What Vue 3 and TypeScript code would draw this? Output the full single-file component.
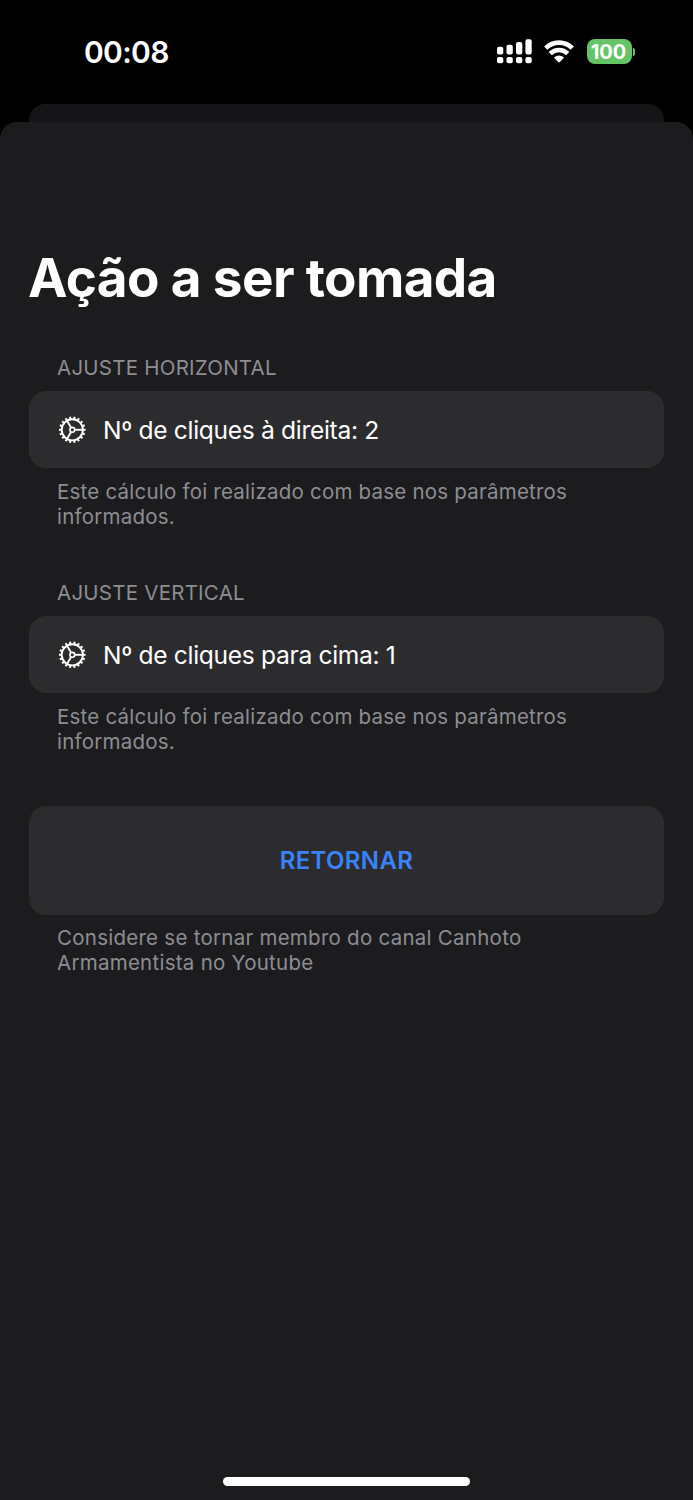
<script setup lang="ts">
interface Adjustment {
  title: string
  label: string
}

const adjustments: Adjustment[] = [
  { title: 'AJUSTE HORIZONTAL', label: 'Nº de cliques à direita: 2' },
  { title: 'AJUSTE VERTICAL', label: 'Nº de cliques para cima: 1' },
]

const teeth = Array.from({ length: 18 }, (_, i) => i * 20)
const spokes = [0, 120, 240]
</script>

<template>
  <div class="screen">
    <header class="status">
      <span class="time">00:08</span>
      <div class="indicators">
        <svg class="signal" width="36" height="26" viewBox="0 0 36 26" fill="#fff">
          <rect x="0" y="8.8" width="6.3" height="7.6" rx="2" />
          <rect x="9.5" y="6.8" width="6.3" height="9.6" rx="2" />
          <rect x="19" y="4" width="6.3" height="12.4" rx="2" />
          <rect x="28.4" y="1.2" width="6.3" height="15.2" rx="2" />
          <rect v-for="x in [0, 9.5, 19, 28.4]" :key="x" :x="x" y="19" width="6.3" height="6.3" rx="2" />
        </svg>
        <svg class="wifi" width="30" height="24" viewBox="0 0 30 24">
          <g fill="none" stroke="#fff" stroke-width="4.6">
            <path d="M1.7 8.1 A19 19 0 0 1 28.3 8.1" />
            <path d="M6.3 13.6 A12.2 12.2 0 0 1 23.7 13.6" />
          </g>
          <path d="M10 17.5 Q15 13.5 20 17.5 L15.8 22 Q15 22.8 14.2 22 Z" fill="#fff" />
        </svg>
        <div class="battery">
          <span class="level">100</span>
          <i class="nub"></i>
        </div>
      </div>
    </header>
    <div class="backdrop"></div>
    <main class="sheet">
      <h1>Ação a ser tomada</h1>
      <section v-for="item in adjustments" :key="item.title">
        <h2>{{ item.title }}</h2>
        <div class="row">
          <svg class="gear" width="28" height="28" viewBox="-14.3 -13.8 28 28" fill="none" stroke="#fff">
            <circle r="10.6" stroke-width="1.9" />
            <circle r="2.4" stroke-width="1.6" />
            <path v-for="a in spokes" :key="'s' + a" d="M2.8 0H10.5" stroke-width="1.9" :transform="`rotate(${a})`" />
            <path v-for="a in teeth" :key="a" d="M11 0H13.3" stroke-width="2" :transform="`rotate(${a})`" />
          </svg>
          <span class="label">{{ item.label }}</span>
        </div>
        <p>Este cálculo foi realizado com base nos parâmetros<br />informados.</p>
      </section>
      <button type="button">RETORNAR</button>
      <p>Considere se tornar membro do canal Canhoto<br />Armamentista no Youtube</p>
      <div class="home"></div>
    </main>
  </div>
</template>

<style>
body {
  background: #000;
}
</style>

<style scoped>
.screen {
  box-sizing: border-box;
  width: 693px;
  height: 1500px;
  overflow: hidden;
  background: #000;
  color: #fff;
  font-family: Inter, "Liberation Sans", sans-serif;
  display: flex;
  flex-direction: column;
}
.status {
  height: 104px;
  box-sizing: border-box;
  padding: 0 58px 0 84px;
  display: flex;
  justify-content: space-between;
  align-items: flex-start;
}
.time {
  margin-top: 33px;
  font-size: 30px;
  line-height: 38px;
  font-weight: 600;
  letter-spacing: -0.7px;
}
.indicators {
  display: flex;
  align-items: flex-start;
  padding-top: 38px;
}
.wifi {
  margin: 2px 13px 0 11px;
}
.battery {
  display: flex;
  align-items: center;
  margin-top: 1px;
}
.level {
  width: 45px;
  height: 25px;
  box-sizing: border-box;
  padding: 1px 2px 0 0;
  border-radius: 8px;
  background: #65c466;
  font-size: 20px;
  line-height: 25px;
  font-weight: 700;
  text-align: center;
}
.nub {
  width: 2px;
  height: 8px;
  margin-left: 1px;
  border-radius: 0 3px 3px 0;
  background: #65c466;
}
.backdrop {
  flex: none;
  height: 40px;
  margin: 0 29px -22px;
  border-radius: 16px 16px 0 0;
  background: #151517;
}
.sheet {
  position: relative;
  flex: 1;
  box-sizing: border-box;
  padding: 124px 29px 0;
  border-radius: 17px 17px 0 0;
  background: #1c1c1e;
}
h1 {
  margin: 0 0 45px -1px;
  font-size: 53px;
  line-height: 64px;
  font-weight: 700;
  letter-spacing: -0.62px;
  white-space: nowrap;
}
h2 {
  margin: 0 28px 11px;
  font-size: 20.5px;
  line-height: 25px;
  font-weight: 400;
  letter-spacing: 0.24px;
  color: #8d8d93;
}
.row {
  height: 77px;
  box-sizing: border-box;
  padding-left: 29px;
  border-radius: 17px;
  background: #2c2c2e;
  display: flex;
  align-items: center;
}
.label {
  margin-left: 17px;
  font-size: 24.6px;
  line-height: 32px;
  letter-spacing: -0.33px;
}
p {
  margin: 11px 28px 0;
  font-size: 20.5px;
  line-height: 25px;
  letter-spacing: 0.22px;
  color: #8d8d93;
  white-space: nowrap;
}
section {
  height: 225px;
}
button {
  display: block;
  width: 100%;
  height: 109px;
  margin-top: 1px;
  border: 0;
  border-radius: 17px;
  background: #2c2c2e;
  color: #3a82f7;
  font: 600 24px/30px Inter, "Liberation Sans", sans-serif;
  letter-spacing: 0.35px;
}
button + p {
  margin-top: 10px;
  letter-spacing: 0.26px;
}
.home {
  position: absolute;
  left: 223px;
  bottom: 14px;
  width: 247px;
  height: 9px;
  border-radius: 5px;
  background: #fff;
}
</style>
